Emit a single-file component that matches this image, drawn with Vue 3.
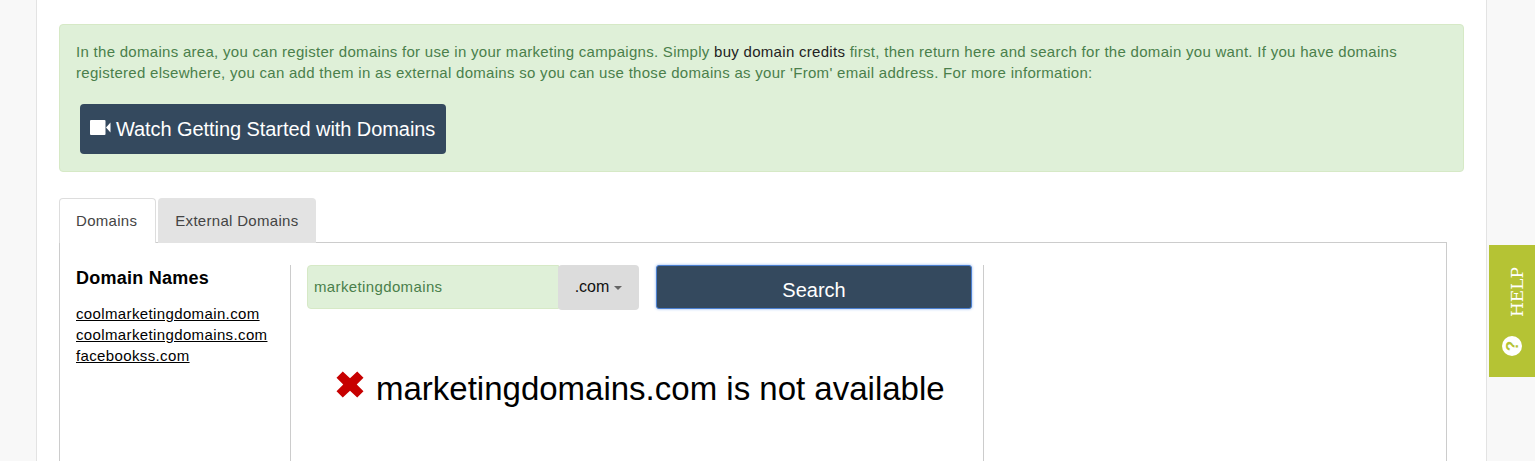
<script setup>
const domains = ['coolmarketingdomain.com', 'coolmarketingdomains.com', 'facebookss.com']
</script>

<template>
  <div class="page">
    <main class="container">
      <section class="alert">
        <p class="alert-text">In the domains area, you can register domains for use in your marketing campaigns. Simply <a class="alert-link">buy domain credits</a> first, then return here and search for the domain you want. If you have domains registered elsewhere, you can add them in as external domains so you can use those domains as your 'From' email address. For more information:</p>
        <button class="watch">
          <svg class="cam" width="21" height="15" viewBox="0 0 21 15"><rect x="0" y="0" width="15.5" height="15" rx="1" fill="#fff"/><path d="M16 7.5 20.5 2.5V12.5Z" fill="#fff"/></svg>
          <span>Watch Getting Started with Domains</span>
        </button>
      </section>

      <nav class="tabs">
        <div class="tab active">Domains</div>
        <div class="tab">External Domains</div>
      </nav>

      <section class="panel">
        <aside class="names">
          <h3>Domain Names</h3>
          <a v-for="d in domains" :key="d" class="dlink">{{ d }}</a>
        </aside>
        <div class="search">
          <div class="search-row">
            <div class="group">
              <div class="input">marketingdomains</div>
              <div class="tld">.com<i class="caret"></i></div>
            </div>
            <button class="go">Search</button>
          </div>
          <div class="result">
            <svg class="x" width="28" height="27" viewBox="0 0 29 28"><path d="M7 0.5 14.5 7.5 22 0.5 28.5 7 21.5 14 28.5 21 22 27.5 14.5 20.5 7 27.5 0.5 21 7.5 14 0.5 7Z" fill="#c70000"/></svg>
            <span>marketingdomains.com is not available</span>
          </div>
        </div>
      </section>
    </main>
    <aside class="help">
      <span class="help-text">HELP</span>
      <svg class="help-icon" width="20" height="20" viewBox="0 0 20 20">
        <circle cx="10" cy="10" r="10" fill="#fff"/>
        <text x="10" y="15.5" text-anchor="middle" class="q" transform="rotate(-90 10 10)">?</text>
      </svg>
    </aside>
  </div>
</template>

<style>
html, body { margin: 0; background: #f8f8f8; overflow: hidden; }
</style>

<style scoped>
.page {
  height: 461px;
  overflow: hidden;
  background: #f8f8f8;
  font-family: "Liberation Sans", Arial, sans-serif;
  padding-left: 36px;
  box-sizing: border-box;
}
.container {
  width: 1451px;
  height: 461px;
  box-sizing: border-box;
  background: #fff;
  border-left: 1px solid #e3e3e3;
  border-right: 1px solid #e3e3e3;
  padding: 24px 22px 0;
}
.alert {
  width: 1405px;
  height: 148px;
  box-sizing: border-box;
  background: #dff0d8;
  border: 1px solid #d6e9c6;
  border-radius: 4px;
  padding: 16px 16px 0;
  color: #4a7f4b;
}
.alert-text {
  margin: 0;
  font-size: 15px;
  line-height: 21px;
  letter-spacing: 0.29px;
}
.alert-link { color: #222; }
.watch {
  display: flex;
  align-items: center;
  gap: 5px;
  margin: 21px 0 0 4px;
  width: 366px;
  height: 50px;
  padding: 0 0 0 11px;
  box-sizing: border-box;
  background: #34495e;
  border: 0;
  border-radius: 4px;
  color: #fff;
  font: 20px "Liberation Sans", Arial, sans-serif;
  letter-spacing: -0.07px;
}
.cam { margin-top: -3px; margin-left: -1px; flex: none; }
.tabs {
  display: flex;
  gap: 2px;
  margin-top: 26px;
}
.tab {
  height: 45px;
  box-sizing: border-box;
  padding: 0 18px 0 17px;
  line-height: 45px;
  font-size: 15px;
  letter-spacing: 0.3px;
  color: #444;
  background: #e3e3e3;
  border-radius: 4px 4px 0 0;
  margin-bottom: -1px;
  position: relative;
}
.tab.active {
  height: 45px;
  line-height: 43px;
  background: #fff;
  border: 1px solid #ddd;
  border-bottom: 0;
  padding: 0 18px 0 16px;
  z-index: 1;
}
.panel {
  display: flex;
  width: 1388px;
  height: 300px;
  box-sizing: border-box;
  border: 1px solid #ccc;
  padding: 22px 0 0 16px;
}
.names {
  width: 215px;
  flex: none;
  border-right: 1px solid #ccc;
  box-sizing: border-box;
}
.names h3 {
  margin: 2px 0 14px;
  font-size: 18px;
  line-height: 22px;
  letter-spacing: 0.25px;
  color: #000;
}
.dlink {
  display: block;
  font-size: 15px;
  line-height: 21px;
  letter-spacing: 0.37px;
  color: #000;
  text-decoration: underline;
}
.search {
  width: 693px;
  flex: none;
  border-right: 1px solid #ccc;
  box-sizing: border-box;
  padding-left: 16px;
}
.search-row {
  display: flex;
  gap: 17px;
}
.group { display: flex; width: 332px; flex: none; }
.input {
  flex: none;
  width: 252px;
  height: 44px;
  box-sizing: border-box;
  background: #dff0d8;
  border: 1px solid #d6e9c6;
  border-radius: 4px 0 0 4px;
  padding-left: 6px;
  line-height: 42px;
  font-size: 15px;
  letter-spacing: 0.37px;
  color: #4a7f4b;
}
.tld {
  flex: none;
  width: 81px;
  height: 45px;
  margin-left: -1px;
  box-sizing: border-box;
  background: #dcdcdc;
  border-radius: 4px;
  text-align: center;
  line-height: 44px;
  font-size: 16px;
  color: #111;
  position: relative;
}
.caret {
  display: inline-block;
  margin-left: 5px;
  vertical-align: middle;
  border-top: 4px solid #666;
  border-left: 4px solid transparent;
  border-right: 4px solid transparent;
}
.go {
  width: 316px;
  height: 44px;
  box-sizing: border-box;
  background: #34495e;
  border: 1px solid #4a7fd0;
  border-radius: 3px;
  box-shadow: 0 0 3px #8fb4ee;
  color: #fff;
  font: 20px/47px "Liberation Sans", Arial, sans-serif;
  padding: 1px 0 0;
}
.result {
  display: flex;
  align-items: flex-start;
  gap: 12px;
  margin: 59px 0 0 29px;
  font-size: 33px;
  line-height: 40px;
  color: #000;
}
.x { margin-top: 2px; flex: none; }
.help {
  position: fixed;
  left: 1489px;
  top: 245px;
  width: 46px;
  height: 132px;
  background: #b5c334;
  color: #fff;
  display: flex;
  flex-direction: column;
  align-items: center;
  box-sizing: border-box;
  padding-top: 22px;
  gap: 19px;
}
.help-text {
  writing-mode: vertical-rl;
  transform: rotate(180deg);
  font: 17px "DejaVu Serif", serif;
  line-height: 20px;
  margin-left: 9px;
}
.help-icon { margin-left: 0; }
.q { font: bold 17px "Liberation Sans", sans-serif; fill: #b5c334; }
</style>
